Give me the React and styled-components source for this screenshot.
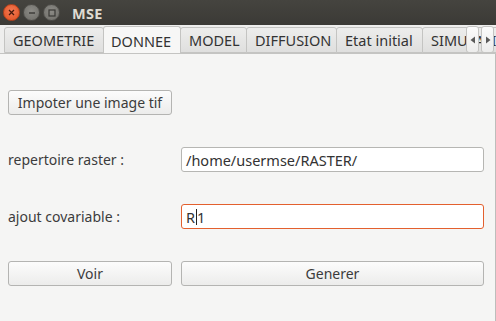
import React from "react";
import styled, { createGlobalStyle } from "styled-components";

const GlobalStyle = createGlobalStyle`
  html, body {
    margin: 0;
    padding: 0;
    width: 496px;
    height: 321px;
    overflow: hidden;
    background: #f5f5f4;
  }
  * {
    box-sizing: border-box;
  }
`;

const tabs = [
  { label: "GEOMETRIE", w: 100 },
  { label: "DONNEE", w: 78, active: true },
  { label: "MODEL", w: 67 },
  { label: "DIFFUSION", w: 91 },
  { label: "Etat initial", w: 87 },
  { label: "SIMULATION", w: 80 },
];

const App = () => {
  return (
    <>
      <GlobalStyle />
      <Window>
        <TitleBar>
          <WinButtons>
            <WinButton $kind="close">
              <svg width="7" height="7" viewBox="0 0 7 7">
                <path d="M1 1L6 6M6 1L1 6" stroke="#4a1a0c" strokeWidth="1.3" />
              </svg>
            </WinButton>
            <WinButton>
              <svg width="8" height="8" viewBox="0 0 8 8">
                <path d="M1 4H7" stroke="#3a3936" strokeWidth="1.4" />
              </svg>
            </WinButton>
            <WinButton>
              <svg width="8" height="8" viewBox="0 0 8 8">
                <rect x="1" y="1" width="6" height="6" fill="none" stroke="#3a3936" strokeWidth="1.2" />
              </svg>
            </WinButton>
          </WinButtons>
          <Title>MSE</Title>
        </TitleBar>

        <TabBar>
          <TabStrip>
            {tabs.map((t) => (
              <Tab key={t.label} $w={t.w} $active={t.active}>
                {t.label}
              </Tab>
            ))}
          </TabStrip>
          <Scroller>
            <ScrollButton>
              <svg width="6" height="8" viewBox="0 0 6 8">
                <path d="M5 0.5V7.5L0.5 4Z" fill="#5a5a5a" />
              </svg>
            </ScrollButton>
            <ScrollButton>
              <svg width="6" height="8" viewBox="0 0 6 8">
                <path d="M1 0.5V7.5L5.5 4Z" fill="#5a5a5a" />
              </svg>
            </ScrollButton>
          </Scroller>
        </TabBar>

        <Panel>
          <Form>
            <Button>Impoter une image tif</Button>
            <span />

            <Label>repertoire raster :</Label>
            <Field>/home/usermse/RASTER/</Field>

            <Label>ajout covariable :</Label>
            <Field $focus>
              R<Caret />1
            </Field>

            <Button>Voir</Button>
            <Button>Generer</Button>
          </Form>
        </Panel>
      </Window>
    </>
  );
};

const Window = styled.div`
  width: 496px;
  height: 321px;
  display: flex;
  flex-direction: column;
  font-family: "Noto Sans", "Open Sans", sans-serif;
  color: #3c3c3c;
`;

const TitleBar = styled.div`
  height: 25px;
  flex-shrink: 0;
  display: flex;
  align-items: center;
  padding-left: 3px;
  background: linear-gradient(#45443f, #3b3a36);
`;

const WinButtons = styled.div`
  display: flex;
  gap: 3px;
`;

const WinButton = styled.div`
  width: 17px;
  height: 17px;
  border-radius: 50%;
  display: flex;
  align-items: center;
  justify-content: center;
  background: ${({ $kind }) =>
    $kind === "close"
      ? "radial-gradient(circle at 50% 40%, #f37a55, #e0501f)"
      : "radial-gradient(circle at 50% 40%, #8c8b86, #6d6c67)"};
  border: 1px solid ${({ $kind }) => ($kind === "close" ? "#b8421c" : "#4f4e4a")};
`;

const Title = styled.div`
  margin-left: 12px;
  font-size: 14.5px;
  font-weight: 700;
  color: #dfdbd2;
  letter-spacing: 0.3px;
`;

const TabBar = styled.div`
  height: 29px;
  flex-shrink: 0;
  display: flex;
  background: #eeeeed;
  border-bottom: 1px solid #c4c4c2;
  position: relative;
`;

const TabStrip = styled.div`
  flex: 1;
  display: flex;
  align-items: flex-end;
  padding-left: 4px;
  overflow: hidden;
`;

const Tab = styled.div`
  flex-shrink: 0;
  width: ${({ $w }) => $w}px;
  height: ${({ $active }) => ($active ? "28px" : "26px")};
  margin-bottom: ${({ $active }) => ($active ? "-1px" : "0")};
  padding-left: ${({ $active }) => ($active ? "7px" : "8px")};
  display: flex;
  align-items: center;
  font-size: 14.5px;
  color: #333;
  white-space: nowrap;
  overflow: hidden;
  border: 1px solid #c4c4c2;
  border-bottom: ${({ $active }) => ($active ? "none" : "1px solid #c4c4c2")};
  border-radius: 3px 3px 0 0;
  margin-right: -1px;
  background: ${({ $active }) =>
    $active ? "#f7f7f6" : "linear-gradient(#ededec, #dfdfde)"};
  position: ${({ $active }) => ($active ? "relative" : "static")};
  z-index: ${({ $active }) => ($active ? 1 : 0)};
`;

const Scroller = styled.div`
  position: absolute;
  right: 2px;
  top: 1px;
  display: flex;
  gap: 2px;
`;

const ScrollButton = styled.div`
  width: 13px;
  height: 27px;
  display: flex;
  align-items: center;
  justify-content: center;
  background: linear-gradient(#fbfbfb, #ededec);
  border: 1px solid #c4c4c2;
  border-radius: 3px;
`;

const Panel = styled.div`
  flex: 1;
  background: #f5f5f4;
  border-right: 1px solid #bdbdbb;
  padding: 36px 11px 0 8px;
`;

const Form = styled.div`
  display: grid;
  grid-template-columns: 164px 1fr;
  grid-auto-rows: 25px;
  column-gap: 9px;
  row-gap: 32px;
  align-items: center;
`;

const Button = styled.div`
  height: 25px;
  display: flex;
  align-items: center;
  justify-content: center;
  font-size: 14px;
  color: #3c3c3c;
  background: linear-gradient(#fcfcfc, #ececeb);
  border: 1px solid #b4b4b2;
  border-radius: 3px;
  white-space: nowrap;
`;

const Label = styled.div`
  font-size: 14px;
  color: #3c3c3c;
  white-space: nowrap;
`;

const Field = styled.div`
  height: 25px;
  display: flex;
  align-items: center;
  padding-left: 4px;
  font-size: 14.5px;
  color: #333;
  background: #fff;
  border: 1px solid ${({ $focus }) => ($focus ? "#e3602e" : "#b6b6b3")};
  border-radius: 3px;
  white-space: nowrap;
`;

const Caret = styled.span`
  display: inline-block;
  width: 1px;
  height: 16px;
  background: #222;
  margin: 0 0.5px;
`;

export default App;
